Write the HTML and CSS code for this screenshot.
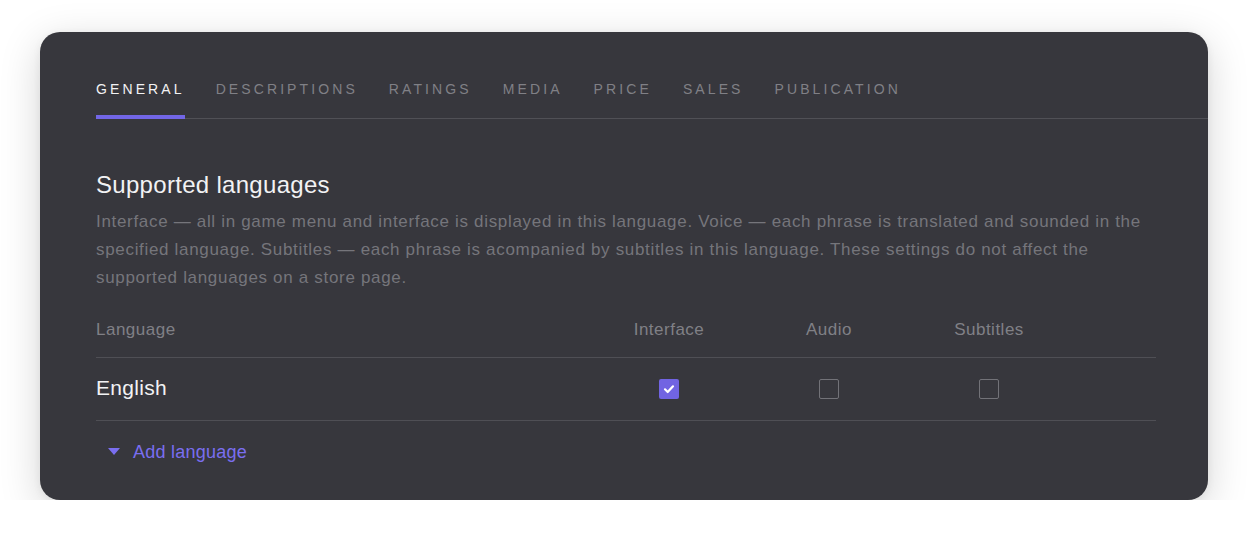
FILE: index.html
```html
<!DOCTYPE html>
<html lang="en">
<head>
<meta charset="utf-8">
<title>Supported languages</title>
<link rel="stylesheet" href="styles.css">
</head>
<body>
<div class="card">
  <nav class="tabs">
    <a class="tab active">General</a>
    <a class="tab">Descriptions</a>
    <a class="tab">Ratings</a>
    <a class="tab">Media</a>
    <a class="tab">Price</a>
    <a class="tab">Sales</a>
    <a class="tab">Publication</a>
  </nav>
  <section class="content">
    <h2 class="title">Supported languages</h2>
    <p class="desc">Interface — all in game menu and interface is displayed in this language. Voice — each phrase is translated and sounded in the specified language. Subtitles — each phrase is acompanied by subtitles in this language. These settings do not affect the supported languages on a store page.</p>
    <div class="table">
      <div class="row head">
        <div class="cell lang">Language</div>
        <div class="cell">Interface</div>
        <div class="cell">Audio</div>
        <div class="cell">Subtitles</div>
        <div class="cell"></div>
      </div>
      <div class="row body">
        <div class="cell lang name">English</div>
        <div class="cell"><span class="box checked"><svg viewBox="0 0 20 20" width="20" height="20"><path d="M6 10.3 L8.7 13 L14 7.3" fill="none" stroke="#fff" stroke-width="2.2" stroke-linecap="round" stroke-linejoin="round"/></svg></span></div>
        <div class="cell"><span class="box"></span></div>
        <div class="cell"><span class="box"></span></div>
        <div class="cell"></div>
      </div>
    </div>
    <a class="add"><span class="tri"></span>Add language</a>
  </section>
</div>
</body>
</html>
```
FILE: styles.css
```css
html, body {
  margin: 0;
  padding: 0;
  background: #ffffff;
}
body {
  padding: 32px 40px 0 40px;
  font-family: "Liberation Sans", Arial, sans-serif;
}
.card {
  width: 1168px;
  height: 468px;
  box-sizing: border-box;
  background: #37373d;
  border-radius: 20px;
  box-shadow: 0 10px 40px rgba(0, 0, 0, 0.17), 0 2px 8px rgba(0,0,0,0.06);
  padding-top: 45px;
  overflow: hidden;
}
.tabs {
  display: flex;
  gap: 31px;
  margin-left: 56px;
  border-bottom: 1px solid #505056;
}
.tab {
  position: relative;
  font-size: 14px;
  line-height: 24px;
  letter-spacing: 3.1px;
  text-transform: uppercase;
  color: #808086;
  padding-bottom: 17px;
}
.tab.active {
  color: #f2f2f4;
}
.tab.active::after {
  content: "";
  position: absolute;
  left: 0;
  right: 0;
  bottom: -1px;
  height: 4px;
  background: #7266e6;
}
.content {
  padding: 51px 52px 0 56px;
}
.title {
  margin: 0;
  font-weight: 400;
  font-size: 24px;
  letter-spacing: 0.3px;
  line-height: 30px;
  color: #f2f2f4;
}
.desc {
  margin: 8px 0 0 0;
  font-size: 17px;
  letter-spacing: 0.68px;
  line-height: 28px;
  color: #75757b;
}
.table {
  margin-top: 24px;
}
.row {
  display: grid;
  grid-template-columns: 1fr 160px 160px 160px 87px;
  align-items: center;
  border-bottom: 1px solid #4f4f55;
}
.row.head {
  padding-bottom: 13px;
}
.row.head .cell {
  display: block;
  font-size: 17px;
  letter-spacing: 0.5px;
  line-height: 28px;
  color: #808086;
  text-align: center;
}
.row.head .cell.lang {
  text-align: left;
}
.row.body {
  height: 62px;
}
.cell {
  display: flex;
  justify-content: center;
  align-items: center;
}
.cell.lang {
  justify-content: flex-start;
}
.name {
  font-size: 21px;
  letter-spacing: 0.3px;
  color: #f2f2f4;
  padding-bottom: 2px;
}
.box {
  width: 20px;
  height: 20px;
  box-sizing: border-box;
  border: 1.5px solid #727278;
  border-radius: 2px;
  display: block;
}
.box.checked {
  background: #7164e2;
  border: none;
}
.box svg {
  display: block;
}
.add {
  display: flex;
  align-items: center;
  margin-top: 17px;
  padding-left: 12px;
  font-size: 18px;
  letter-spacing: 0.25px;
  line-height: 28px;
  color: #7a6ef0;
}
.tri {
  width: 0;
  height: 0;
  border-left: 6px solid transparent;
  border-right: 6px solid transparent;
  border-top: 7px solid #7a6ef0;
  margin-right: 13px;
  margin-top: -1px;
}
```
